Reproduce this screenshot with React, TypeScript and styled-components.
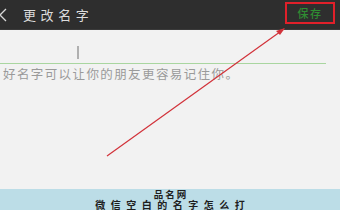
import React from "react";
import styled, { createGlobalStyle } from "styled-components";

const Global = createGlobalStyle`
  html, body { margin: 0; padding: 0; background: #f2f2f2; }
  #root { width: 340px; height: 210px; overflow: hidden; }
  * { box-sizing: border-box; }
`;

const Page = styled.div`
  position: relative;
  width: 340px;
  height: 210px;
  display: flex;
  flex-direction: column;
  background: #f2f2f2;
  font-family: "Noto Sans CJK SC", "Noto Sans", sans-serif;
`;

const Header = styled.div`
  height: 30px;
  flex: none;
  background: #2e2e2e;
  border-bottom: 1px solid #3a3a3a;
  display: flex;
  align-items: center;
  padding: 0 5px 0 0;
`;

const Back = styled.svg`
  width: 8px;
  height: 14px;
  margin-left: -1px;
  flex: none;
`;

const Title = styled.div`
  margin-left: 16px;
  color: #dcdcdc;
  font-size: 13px;
  letter-spacing: 4.6px;
  line-height: 1;
`;

const Save = styled.div`
  margin-left: auto;
  width: 50px;
  height: 22px;
  margin-top: -3px;
  border: 2.5px solid #e0202a;
  display: flex;
  align-items: center;
  justify-content: center;
  color: #2f8c32;
  font-size: 11px;
  letter-spacing: 1.5px;
  font-weight: 500;
`;

const InputRow = styled.div`
  height: 34px;
  width: 326px;
  flex: none;
  border-bottom: 1px solid #a9d6a0;
  display: flex;
  align-items: flex-end;
  padding: 0 0 4px 77px;
`;

const Cursor = styled.div`
  width: 1.5px;
  height: 13px;
  background: #b0b0b0;
`;

const Hint = styled.div`
  padding: 2px 0 0 3px;
  color: #9a9a9a;
  font-size: 12.5px;
  letter-spacing: 1.4px;
  line-height: 16px;
  white-space: nowrap;
`;

const Spacer = styled.div`
  flex: 1;
`;

const Footer = styled.div`
  height: 21px;
  flex: none;
  background: #bcdde7;
  display: flex;
  flex-direction: column;
  align-items: center;
  color: #1e1e1e;
  font-family: "Noto Sans CJK SC", serif;
  font-weight: 700;
`;

const FooterLine = styled.div<{ $spacing: number; $size: number }>`
  font-size: ${(p) => p.$size}px;
  line-height: 10.5px;
  height: 10.5px;
  letter-spacing: ${(p) => p.$spacing}px;
  margin-right: -${(p) => p.$spacing}px;
  white-space: nowrap;
`;

const Overlay = styled.svg`
  position: absolute;
  left: 0;
  top: 0;
  width: 340px;
  height: 210px;
  pointer-events: none;
`;

export default function App() {
  return (
    <>
      <Global />
      <Page>
        <Header>
          <Back viewBox="0 0 8 14">
            <path d="M7 1 L1 7 L7 13" stroke="#d8d8d8" strokeWidth="1.3" fill="none" />
          </Back>
          <Title>更改名字</Title>
          <Save>保存</Save>
        </Header>
        <InputRow>
          <Cursor />
        </InputRow>
        <Hint>好名字可以让你的朋友更容易记住你。</Hint>
        <Spacer />
        <Footer>
          <FooterLine $size={9.5} $spacing={2}>品名网</FooterLine>
          <FooterLine $size={10} $spacing={5.5}>微信空白的名字怎么打</FooterLine>
        </Footer>
        <Overlay viewBox="0 0 340 210">
          <line x1="107" y1="156" x2="284" y2="29" stroke="#d2323a" strokeWidth="1.2" />
          <path d="M285 28 L276 31 L280 35 Z" fill="#d2323a" />
        </Overlay>
      </Page>
    </>
  );
}
